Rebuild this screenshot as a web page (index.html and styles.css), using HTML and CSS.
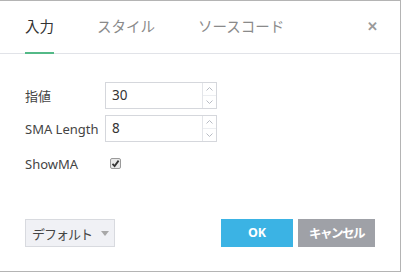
FILE: index.html
```html
<!DOCTYPE html>
<html lang="ja">
<head>
    <meta charset="UTF-8">
    <title>インジケーター設定</title>
    <link rel="stylesheet" href="styles.css">
</head>
<body>
    <div class="dialog">
        <!-- Tabs -->
        <div class="dialog-header">
            <div class="tab active">入力</div>
            <div class="tab">スタイル</div>
            <div class="tab">ソースコード</div>
            <span class="close-btn">✕</span>
        </div>

        <!-- Inputs -->
        <div class="dialog-body">
            <div class="form-row">
                <label class="form-label">指値</label>
                <div class="num-input">
                    <span class="num-value">30</span>
                    <span class="spinner">
                        <span class="spin-btn">
                            <svg width="7" height="4" viewBox="0 0 7 4"><path d="M0.5 3.5 L3.5 0.5 L6.5 3.5" fill="none" stroke="#b8bcc4" stroke-width="1"/></svg>
                        </span>
                        <span class="spin-btn">
                            <svg width="7" height="4" viewBox="0 0 7 4"><path d="M0.5 0.5 L3.5 3.5 L6.5 0.5" fill="none" stroke="#b8bcc4" stroke-width="1"/></svg>
                        </span>
                    </span>
                </div>
            </div>
            <div class="form-row">
                <label class="form-label">SMA Length</label>
                <div class="num-input">
                    <span class="num-value">8</span>
                    <span class="spinner">
                        <span class="spin-btn">
                            <svg width="7" height="4" viewBox="0 0 7 4"><path d="M0.5 3.5 L3.5 0.5 L6.5 3.5" fill="none" stroke="#b8bcc4" stroke-width="1"/></svg>
                        </span>
                        <span class="spin-btn">
                            <svg width="7" height="4" viewBox="0 0 7 4"><path d="M0.5 0.5 L3.5 3.5 L6.5 0.5" fill="none" stroke="#b8bcc4" stroke-width="1"/></svg>
                        </span>
                    </span>
                </div>
            </div>
            <div class="form-row check-row">
                <label class="form-label">ShowMA</label>
                <span class="checkbox">
                    <svg width="9" height="9" viewBox="0 0 9 9"><path d="M1.5 4.8 L3.6 7 L7.6 1.6" fill="none" stroke="#333" stroke-width="1.8"/></svg>
                </span>
            </div>
        </div>

        <!-- Buttons -->
        <div class="dialog-footer">
            <button class="btn-default">デフォルト<span class="caret"></span></button>
            <div class="footer-right">
                <button class="btn btn-ok">OK</button>
                <button class="btn btn-cancel">キャンセル</button>
            </div>
        </div>
    </div>
</body>
</html>
```

FILE: styles.css
```css
body, html {
    margin: 0;
    background-color: #fff;
}

.dialog {
    width: 401px;
    height: 272px;
    box-sizing: border-box;
    border: 1px solid #b4b4b4;
    border-left: none;
    display: flex;
    flex-direction: column;
    font-family: "Noto Sans", "Noto Sans CJK JP", sans-serif;
    color: #4a4a4a;
    background-color: #fff;
}

/* Tab header */
.dialog-header {
    display: flex;
    align-items: stretch;
    height: 52px;
    padding: 0 22px 0 25px;
    border-bottom: 1px solid #e1e3e8;
}

.tab {
    font-size: 14.5px;
    line-height: 20px;
    padding-top: 15px;
    margin-right: 43px;
    color: #8a8a8a;
    border-bottom: 2px solid transparent;
    margin-bottom: -1px;
}

.tab.active {
    color: #333;
    border-bottom-color: #53b987;
}

.close-btn {
    margin-left: auto;
    font-size: 13px;
    line-height: 20px;
    padding-top: 15px;
    color: #9a9a9a;
    font-weight: bold;
}

/* Form body */
.dialog-body {
    padding: 28px 25px 0;
    display: flex;
    flex-direction: column;
    gap: 6px;
}

.form-row {
    display: flex;
    align-items: center;
    height: 27px;
}

.form-label {
    width: 80px;
    font-size: 13px;
    color: #444;
}

.num-input {
    width: 112px;
    height: 27px;
    box-sizing: border-box;
    border: 1px solid #d5d7dc;
    display: flex;
}

.num-value {
    flex: 1;
    padding-left: 6px;
    font-size: 13.5px;
    line-height: 25px;
    color: #333;
}

.spinner {
    width: 13px;
    border-left: 1px solid #e3e5e9;
    display: flex;
    flex-direction: column;
}

.spin-btn {
    flex: 1;
    display: flex;
    align-items: center;
    justify-content: center;
}

.spin-btn + .spin-btn {
    border-top: 1px solid #eceef1;
}

.check-row {
    margin-top: 2px;
}

.checkbox {
    width: 11px;
    height: 11px;
    box-sizing: border-box;
    margin-left: 5px;
    border: 1px solid #9a9a9a;
    border-radius: 2px;
    background-color: #e8e8e8;
    display: flex;
    align-items: center;
    justify-content: center;
}

/* Footer */
.dialog-footer {
    margin-top: auto;
    display: flex;
    justify-content: space-between;
    padding: 0 25px 24px;
}

.btn-default {
    width: 90px;
    height: 28px;
    box-sizing: border-box;
    background-color: #f0f1f5;
    border: 1px solid #d8dadf;
    font-family: inherit;
    font-size: 13px;
    letter-spacing: -1px;
    color: #444;
    padding: 0 0 0 1px;
    display: flex;
    align-items: center;
    justify-content: center;
}

.caret {
    display: inline-block;
    width: 0;
    height: 0;
    margin-left: 9px;
    border-left: 4px solid transparent;
    border-right: 4px solid transparent;
    border-top: 5px solid #a8a8a8;
}

.footer-right {
    display: flex;
    gap: 5px;
}

.btn {
    height: 28px;
    border: none;
    color: #fff;
    font-family: inherit;
    font-weight: bold;
    font-size: 12.5px;
    padding: 0 0 2px;
}

.btn-ok {
    width: 72px;
    background-color: #3bb3e4;
}

.btn-cancel {
    width: 77px;
    background-color: #9fa1a7;
    letter-spacing: -1.5px;
}
```
